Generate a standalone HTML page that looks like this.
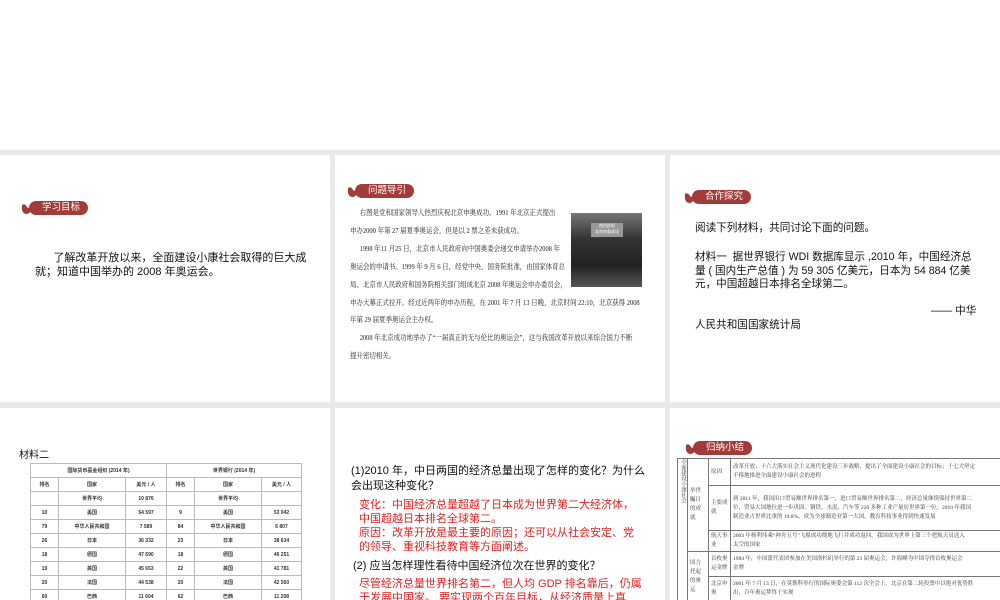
<!DOCTYPE html>
<html><head><meta charset="utf-8"><style>
*{margin:0;padding:0;box-sizing:border-box}
body{width:1000px;height:600px;background:#e9e9e9;position:relative;overflow:hidden;font-family:"Liberation Sans","Noto Sans CJK SC",sans-serif;color:#111}
.s{position:absolute;background:#fff;overflow:hidden}
.a{position:absolute;white-space:nowrap}
.badge{position:absolute;height:14px;width:67px}
.badge .p{position:absolute;left:8px;top:0;right:0;bottom:0;background:#a23c3a;border-radius:7px;color:#fff;font-size:9.5px;line-height:14px;padding-left:13px}
.badge svg{position:absolute;left:0;top:0}
.ser{font-family:"Liberation Serif","Noto Serif CJK SC",serif;font-size:7.2px;line-height:17.9px;color:#222;transform:scaleX(0.9);transform-origin:0 0}
table{border-collapse:collapse}
.t1 td{border:1px solid #bbb;font-size:5px;text-align:center;height:14px;font-weight:bold;color:#333}
.t2 td{border:1px solid #777;font-size:5.5px;font-family:"Liberation Serif","Noto Serif CJK SC",serif;color:#333;line-height:9px;padding:1px 2px}
.red{color:#e02020}
</style></head><body>
<div class="s" style="left:0;top:0;width:1000px;height:150px"></div>

<!-- slide 1 -->
<div class="s" style="left:0;top:155px;width:330px;height:247px">
 <div class="badge" style="left:21px;top:46px"><div class="p">学习目标</div>
  <svg width="16" height="14"><path d="M1 4 Q4 2 6 6 Q8 9 11 1 L13 1 Q11 13 5 13 Q0 12 1 4Z" fill="#a23c3a"/></svg></div>
 <div class="a" style="left:35px;top:96px;font-size:11px;line-height:14px">&nbsp;&nbsp;&nbsp;&nbsp;&nbsp;&nbsp;了解改革开放以来，全面建设小康社会取得的巨大成<br>就；知道中国举办的 2008 年奥运会。</div>
</div>

<!-- slide 2 -->
<div class="s" style="left:335px;top:155px;width:330px;height:247px">
 <div class="badge" style="left:12px;top:29px"><div class="p">问题导引</div>
  <svg width="16" height="14"><path d="M1 4 Q4 2 6 6 Q8 9 11 1 L13 1 Q11 13 5 13 Q0 12 1 4Z" fill="#a23c3a"/></svg></div>
 <div class="a ser" style="left:15px;top:50px">&nbsp;&nbsp;&nbsp;&nbsp;&nbsp;&nbsp;右图是党和国家领导人热烈庆祝北京申奥成功。1991 年北京正式提出<br>申办2000 年第 27 届夏季奥运会，但是以 2 票之差未获成功。<br>&nbsp;&nbsp;&nbsp;&nbsp;&nbsp;&nbsp;1998 年11 月25 日，北京市人民政府向中国奥委会递交申请举办2008 年<br>奥运会的申请书。1999 年 9 月 6 日，经党中央、国务院批准，由国家体育总<br>局、北京市人民政府和国务院相关部门组成北京 2008 年奥运会申办委员会，<br>申办大幕正式拉开。经过近两年的申办历程，在 2001 年 7 月 13 日晚，北京时间 22:10，北京获得 2008<br>年第 29 届夏季奥运会主办权。<br>&nbsp;&nbsp;&nbsp;&nbsp;&nbsp;&nbsp;2008 年北京成功地举办了“一届真正的无与伦比的奥运会”，这与我国改革开放以来综合国力不断<br>提升密切相关。</div>
 <div class="a" style="left:236px;top:58px;width:71px;height:74px;background:linear-gradient(#777,#333 35%,#222 70%,#555);"><div style="position:absolute;left:20px;top:10px;width:32px;height:14px;background:#999;font-size:4px;color:#fff;text-align:center">热烈庆祝<br>北京申奥成功</div></div>
</div>

<!-- slide 3 -->
<div class="s" style="left:670px;top:155px;width:330px;height:247px">
 <div class="badge" style="left:14px;top:35px"><div class="p">合作探究</div>
  <svg width="16" height="14"><path d="M1 4 Q4 2 6 6 Q8 9 11 1 L13 1 Q11 13 5 13 Q0 12 1 4Z" fill="#a23c3a"/></svg></div>
 <div class="a" style="left:25px;top:67px;font-size:10.6px;line-height:13px">阅读下列材料，共同讨论下面的问题。</div>
 <div class="a" style="left:25px;top:96px;font-size:10.6px;line-height:13.5px">材料一&nbsp; 据世界银行 WDI 数据库显示 ,2010 年，中国经济总<br>量 ( 国内生产总值 ) 为 59 305 亿美元，日本为 54 884 亿美<br>元，中国超越日本排名全球第二。</div>
 <div class="a" style="left:261px;top:148px;font-size:10.6px">—— 中华</div>
 <div class="a" style="left:25px;top:162px;font-size:10.6px">人民共和国国家统计局</div>
</div>

<!-- slide 4 -->
<div class="s" style="left:0;top:408px;width:330px;height:192px">
 <div class="a" style="left:19px;top:38px;font-size:10px">材料二</div>
 <table class="t1" style="position:absolute;left:30px;top:55px;width:272px">
  <tr><td colspan="3">国际货币基金组织 (2014 年)</td><td colspan="3">世界银行 (2014 年)</td></tr>
  <tr><td style="width:28px">排名</td><td>国家</td><td style="width:41px">美元 / 人</td><td style="width:28px">排名</td><td>国家</td><td style="width:40px">美元 / 人</td></tr>
  <tr><td></td><td>世界平均</td><td>10 876</td><td></td><td>世界平均</td><td></td></tr>
  <tr><td>10</td><td>美国</td><td>54 597</td><td>9</td><td>美国</td><td>53 042</td></tr>
  <tr><td>79</td><td>中华人民共和国</td><td>7 589</td><td>84</td><td>中华人民共和国</td><td>6 807</td></tr>
  <tr><td>26</td><td>日本</td><td>36 332</td><td>23</td><td>日本</td><td>38 634</td></tr>
  <tr><td>18</td><td>德国</td><td>47 590</td><td>18</td><td>德国</td><td>46 251</td></tr>
  <tr><td>19</td><td>英国</td><td>45 653</td><td>22</td><td>英国</td><td>41 781</td></tr>
  <tr><td>20</td><td>法国</td><td>44 538</td><td>20</td><td>法国</td><td>42 560</td></tr>
  <tr><td>60</td><td>巴西</td><td>11 604</td><td>62</td><td>巴西</td><td>11 208</td></tr>
 </table>
</div>

<!-- slide 5 -->
<div class="s" style="left:335px;top:408px;width:330px;height:192px">
 <div class="a" style="left:16px;top:56px;font-size:11px;line-height:14.5px">(1)2010 年，中日两国的经济总量出现了怎样的变化？为什么<br>会出现这种变化？</div>
 <div class="a red" style="left:24px;top:90px;font-size:11px;line-height:14px">变化：中国经济总量超越了日本成为世界第二大经济体，<br>中国超越日本排名全球第二。<br>原因：改革开放是最主要的原因；还可以从社会安定、党<br>的领导、重视科技教育等方面阐述。</div>
 <div class="a" style="left:18px;top:149px;font-size:11px">(2) 应当怎样理性看待中国经济位次在世界的变化？</div>
 <div class="a red" style="left:24px;top:169px;font-size:11px;line-height:14px">尽管经济总量世界排名第二，但人均 GDP 排名靠后，仍属<br>于发展中国家。 要实现两个百年目标，从经济质量上真</div>
</div>

<!-- slide 6 -->
<div class="s" style="left:670px;top:408px;width:330px;height:192px">
 <div class="badge" style="left:15px;top:33px"><div class="p">归纳小结</div>
  <svg width="16" height="14"><path d="M1 4 Q4 2 6 6 Q8 9 11 1 L13 1 Q11 13 5 13 Q0 12 1 4Z" fill="#a23c3a"/></svg></div>
 <table class="t2" style="position:absolute;left:7px;top:50px;width:330px">
  <tr style="height:27px"><td rowspan="6" style="width:10px;padding:0;writing-mode:vertical-rl">全面建设小康社会</td><td rowspan="3" style="width:21px">举世瞩目的成就</td><td style="width:22px">原因</td><td style="text-align:left">改革开放；十六大落实社会主义现代化建设三步战略，提出了全面建设小康社会的目标；十七大坚定<br>不移地推进全面建设小康社会的进程</td></tr>
  <tr style="height:45px"><td>主要成就</td><td style="text-align:left">到 2011 年，我国出口贸易额世界排名第一，进口贸易额世界排名第二，经济总量继续保持世界第二<br>位，贸易大国地位进一步巩固。钢铁、水泥、汽车等 220 多种工业产量居世界第一位。2010 年我国<br>制造业占世界比重的 19.8%，成为全球制造业第一大国。教育科技事业得到快速发展</td></tr>
  <tr style="height:21px"><td>航天事业</td><td style="text-align:left">2003 年杨利伟乘“神舟五号”飞船成功绕地飞行并成功返回。我国成为世界上第三个把航天员送入<br>太空的国家</td></tr>
  <tr style="height:25px"><td rowspan="3">国力托起的奥运</td><td>首枚奥运金牌</td><td style="text-align:left">1984 年，中国派代表团参加在美国洛杉矶举行的第 23 届奥运会，许海峰为中国夺得首枚奥运会<br>金牌</td></tr>
  <tr style="height:25px"><td>北京申奥</td><td style="text-align:left">2001 年 7 月 13 日，在莫斯科举行的国际奥委会第 112 次全会上，北京在第二轮投票中以绝对优势胜<br>出，百年奥运梦终于实现</td></tr>
 </table>
</div>
</body></html>
